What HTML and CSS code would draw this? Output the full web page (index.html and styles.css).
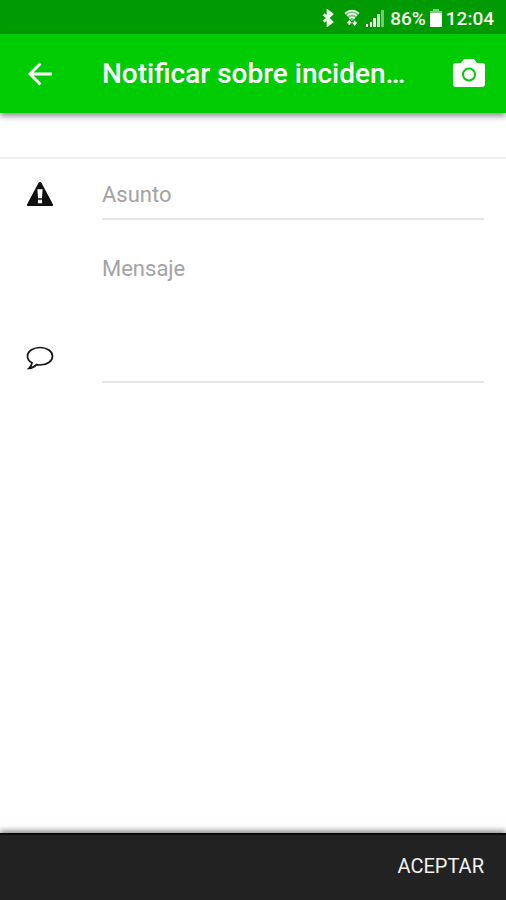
FILE: index.html
```html
<!DOCTYPE html>
<html lang="es">
<head>
<meta charset="utf-8">
<meta name="viewport" content="width=device-width, initial-scale=1">
<title>Notificar</title>
<link rel="stylesheet" href="styles.css">
</head>
<body>
<div class="status">
  <svg class="bluetooth" viewBox="0 0 14 20"><path d="M2 5.500l9.500 9L7 18V2l4.500 3.500L2 14.500" fill="none" stroke="#e9f8e9" stroke-width="3.200"/></svg>
  <svg class="wifi" viewBox="0 0 18 20">
    <path d="M1 5Q9-2 17 5L10 13H8z" fill="#fff" fill-opacity=".45"/>
    <path d="M1 5Q9-2 17 5M3.500 7.500Q9 3 14.500 7.500M6 10.500Q9 8 12 10.500" fill="none" stroke="#fff" stroke-width="1.700"/>
    <path d="M6 12l3 4H7v2H5v-2H3zM12 19l-3-4h2v-2h2v2h2z" fill="#fff"/>
  </svg>
  <svg class="signal" viewBox="0 0 18 18"><path d="M0 18v-3h2v3zM4 18v-5h2v5zM7 18V9h3v9z" fill="#fff"/><path d="M11 18V5h3v13z" fill="#fff" fill-opacity=".8"/><path d="M15 18V1h3v17z" fill="#fff" fill-opacity=".45"/></svg>
  <span>86%</span>
  <svg class="battery" viewBox="0 0 12 18"><path d="M3 0h6v2h3v16H0V2h3z" fill="#fff" fill-opacity=".5"/><path d="M0 4h12v14H0z" fill="#fff"/></svg>
  <span>12:04</span>
</div>
<header class="bar">
  <button class="icon-button" type="button" aria-label="Volver">
    <svg class="back" viewBox="0 0 24 24"><path d="M12.500 1.500L2 12l10.500 10.500M2 12h22" fill="none" stroke="#fff" stroke-width="2.900"/></svg>
  </button>
  <h1 class="title">Notificar sobre inciden…</h1>
  <button class="icon-button" type="button" aria-label="Cámara">
    <svg class="camera" viewBox="0 0 32 28"><path d="M3 4h5l3-4h10l3 4h5q3 0 3 3v18q0 3-3 3H3q-3 0-3-3V7q0-3 3-3z" fill="#fff"/><circle cx="16" cy="15.500" r="6" fill="#fff" stroke="#00cc03" stroke-width="2"/></svg>
  </button>
</header>
<form class="form" id="report">
  <div class="row">
    <label class="row-icon" for="subject" aria-label="Asunto">
      <svg class="warning" viewBox="0 0 26 25"><path d="M13 1q1 0 1.500 1l11 20.500q.8 1.500-1 1.500h-23q-1.800 0-1-1.500L11.500 2Q12 1 13 1z" fill="#111"/><path d="M10.500 8h5l-.6 8.500h-3.800zM11 18h4v3.500h-4z" fill="#fff"/></svg>
    </label>
    <input class="field" id="subject" type="text" placeholder="Asunto">
  </div>
  <div class="row row-message">
    <label class="row-icon" for="message" aria-label="Mensaje">
      <svg class="comment" viewBox="0 0 28 24"><path d="M14 1.500c7 0 12.500 3.800 12.500 8.700S21 19 14 19q-2 0-3.600-.4Q7.500 22 3 22.300q2.500-2.200 3-5.500-4.500-2.400-4.500-6.600C1.500 5.300 7 1.500 14 1.500z" fill="none" stroke="#151515" stroke-width="1.700"/></svg>
    </label>
    <textarea class="field message" id="message" placeholder="Mensaje"></textarea>
  </div>
</form>
<footer class="actions">
  <button class="accept" type="submit" form="report">ACEPTAR</button>
</footer>
</body>
</html>
```
FILE: styles.css
```css
* { box-sizing: border-box; }

body {
  margin: 0;
  min-height: 100vh;
  display: flex;
  flex-direction: column;
  background: #fff;
  font-family: Roboto, "Liberation Sans", sans-serif;
}

svg { display: block; flex: none; }
button { border: 0; padding: 0; background: none; font: inherit; color: inherit; }

.status {
  height: 34px;
  padding: 2px 12px 0;
  display: flex;
  align-items: center;
  justify-content: flex-end;
  gap: 4px;
  background: #009b02;
  color: #f4fcf4;
  font-size: 19px;
  font-weight: 500;
}
.bluetooth { width: 12px; height: 18px; margin-right: 6px; }
.wifi { width: 16px; height: 20px; margin-right: 2px; }
.signal { width: 18px; height: 18px; margin-right: 2px; }
.battery { width: 12px; height: 18px; }

.bar {
  height: 79px;
  padding: 0 17px 0 20px;
  display: flex;
  align-items: center;
  background: #00cc03;
  color: #fff;
  box-shadow: 0 3px 6px rgba(40, 20, 50, 0.5);
}
.icon-button {
  width: 40px;
  height: 48px;
  display: flex;
  align-items: center;
  justify-content: center;
}
.back { width: 24px; height: 24px; }
.camera { width: 32px; height: 28px; margin-bottom: 2px; }
.title {
  flex: 1;
  margin: 0 0 0 42px;
  font-size: 28px;
  font-weight: 500;
  line-height: 40px;
  white-space: nowrap;
}

.form {
  flex: 1;
  margin-top: 44px;
  padding: 12px 22px 0 20px;
  border-top: 2px solid #f0f0f0;
}
.row { display: flex; align-items: center; }
.row-icon {
  width: 40px;
  margin-right: 42px;
  display: flex;
  justify-content: center;
}
.warning { width: 28px; height: 26px; margin-bottom: 4px; }
.comment { width: 28px; height: 24px; }
.field {
  flex: 1;
  min-width: 0;
  height: 49px;
  padding: 0;
  border: 0;
  border-bottom: 2px solid #e6e6e6;
  border-radius: 0;
  outline: 0;
  background: transparent;
  color: #222;
  font: 22px/28px Roboto, "Liberation Sans", sans-serif;
}
.field::placeholder { color: #a3a3a3; opacity: 1; }
.row-message { margin-top: 35px; align-items: flex-end; }
.row-message .row-icon { margin-bottom: 13px; }
.message { height: 128px; resize: none; }

.actions {
  height: 67px;
  padding: 0 22px 4px;
  display: flex;
  align-items: center;
  justify-content: flex-end;
  background: #222;
  border-top: 2px solid #0b0b0b;
  box-shadow: 0 -2px 6px rgba(0, 0, 0, 0.5);
}
.accept { color: #f2f2f2; font-size: 20px; line-height: 40px; }
```
